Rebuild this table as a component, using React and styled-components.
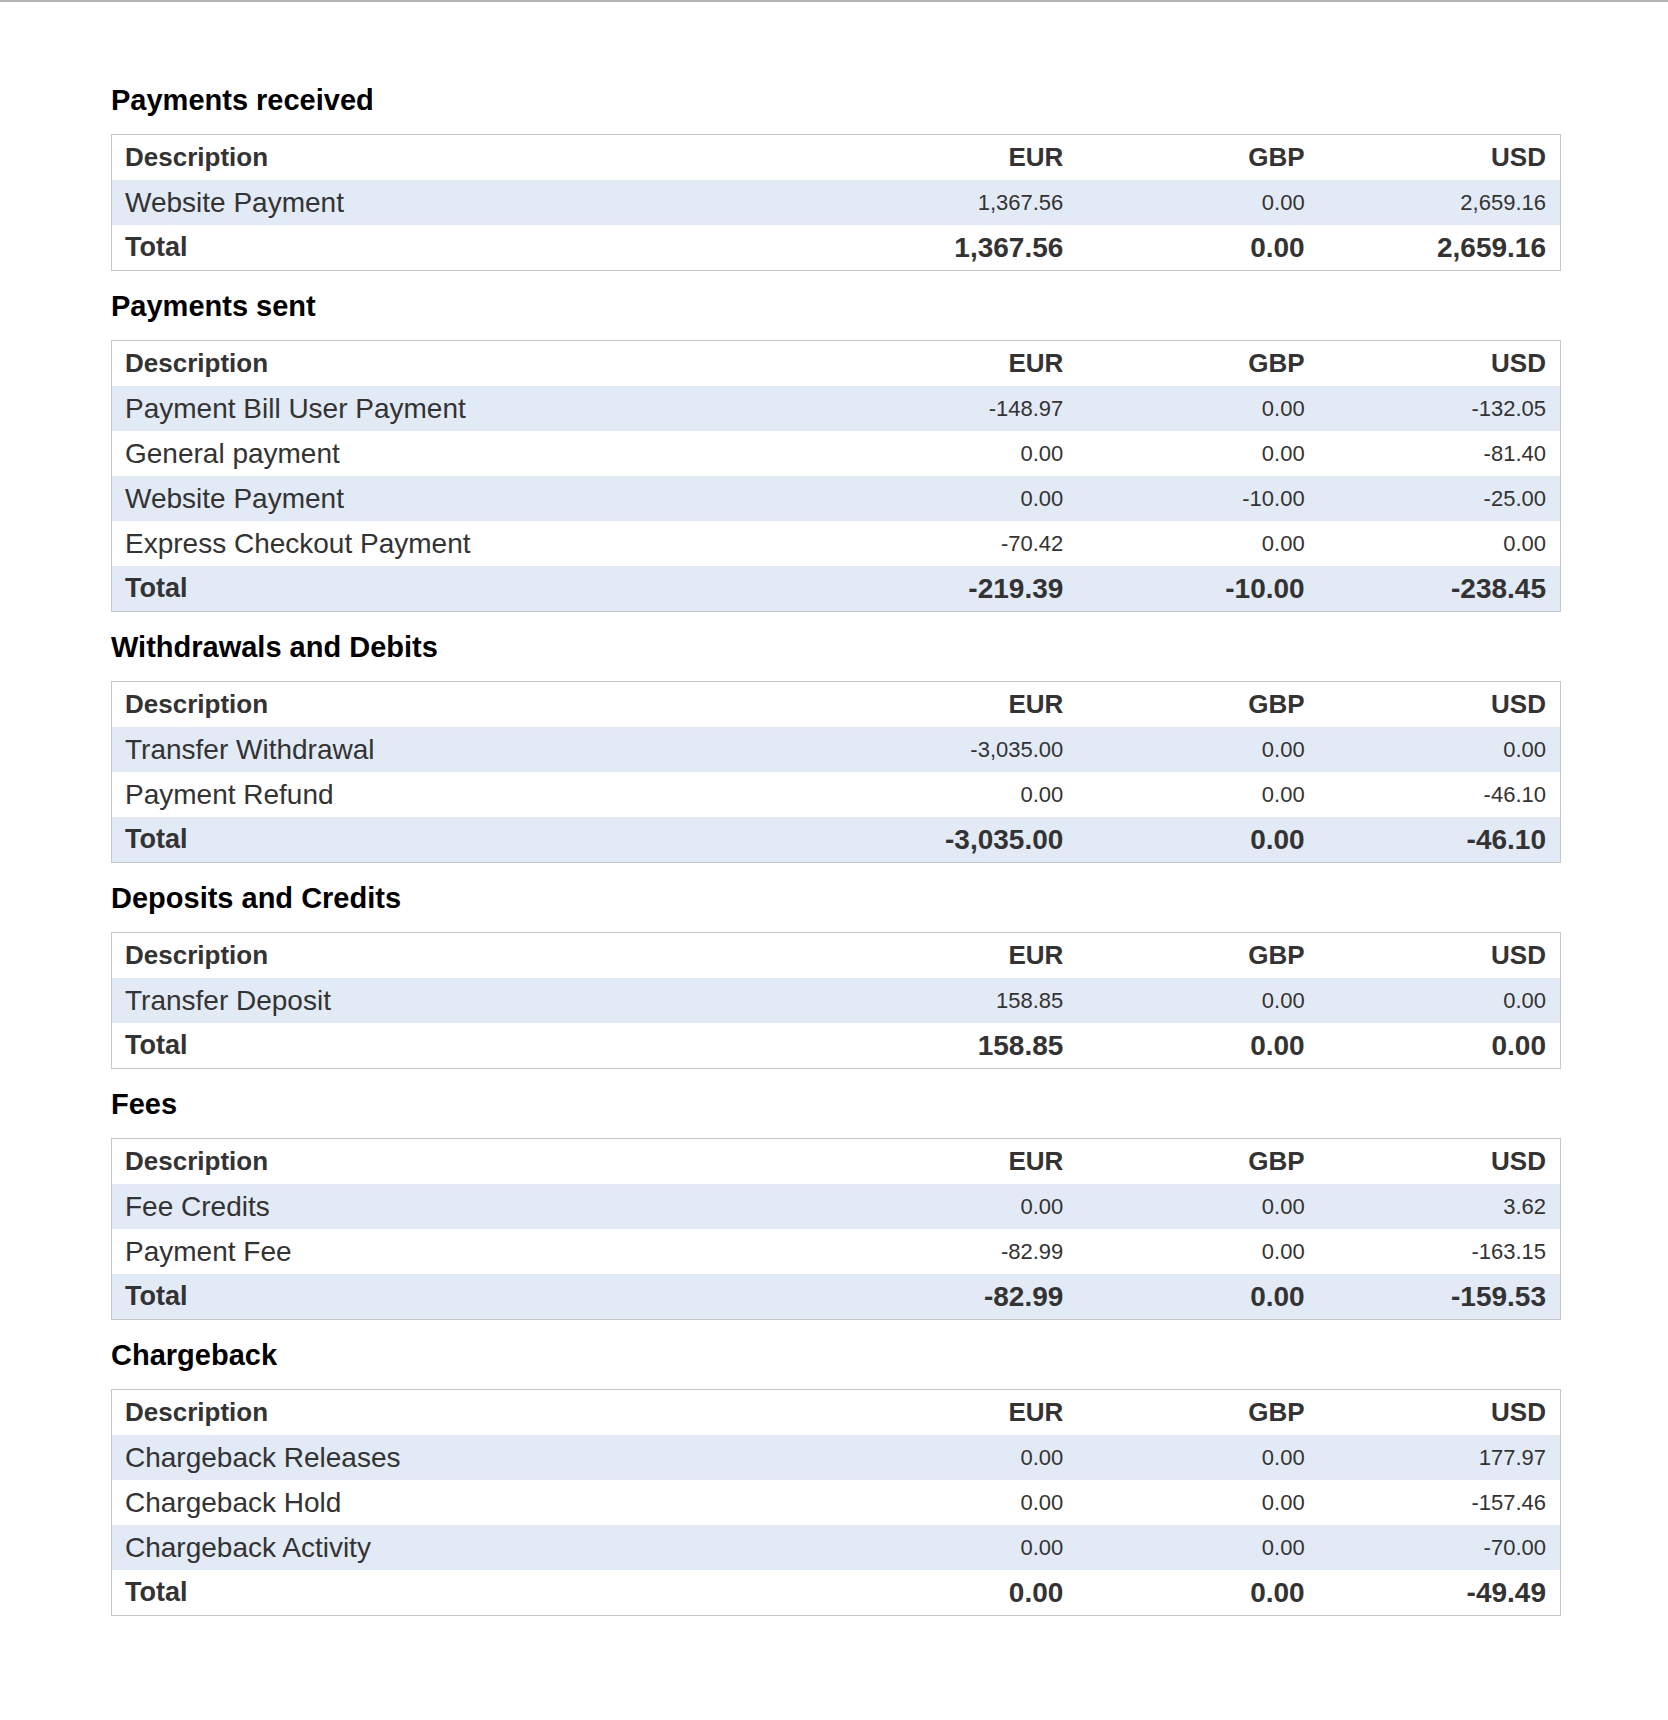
import React from 'react';
import styled, { createGlobalStyle } from 'styled-components';

// summary tables, one per kind of activity
const sections = [
    {
        title: 'Payments received',
        rows: [['Website Payment', '1,367.56', '0.00', '2,659.16']],
        total: ['1,367.56', '0.00', '2,659.16'],
    },
    {
        title: 'Payments sent',
        rows: [
            ['Payment Bill User Payment', '-148.97', '0.00', '-132.05'],
            ['General payment', '0.00', '0.00', '-81.40'],
            ['Website Payment', '0.00', '-10.00', '-25.00'],
            ['Express Checkout Payment', '-70.42', '0.00', '0.00'],
        ],
        total: ['-219.39', '-10.00', '-238.45'],
    },
    {
        title: 'Withdrawals and Debits',
        rows: [
            ['Transfer Withdrawal', '-3,035.00', '0.00', '0.00'],
            ['Payment Refund', '0.00', '0.00', '-46.10'],
        ],
        total: ['-3,035.00', '0.00', '-46.10'],
    },
    {
        title: 'Deposits and Credits',
        rows: [['Transfer Deposit', '158.85', '0.00', '0.00']],
        total: ['158.85', '0.00', '0.00'],
    },
    {
        title: 'Fees',
        rows: [
            ['Fee Credits', '0.00', '0.00', '3.62'],
            ['Payment Fee', '-82.99', '0.00', '-163.15'],
        ],
        total: ['-82.99', '0.00', '-159.53'],
    },
    {
        title: 'Chargeback',
        rows: [
            ['Chargeback Releases', '0.00', '0.00', '177.97'],
            ['Chargeback Hold', '0.00', '0.00', '-157.46'],
            ['Chargeback Activity', '0.00', '0.00', '-70.00'],
        ],
        total: ['0.00', '0.00', '-49.49'],
    },
];

const currencies = ['EUR', 'GBP', 'USD'];

const SummaryTable = ({ title, rows, total }) => {
    return (
        <Section>
            <Heading>{title}</Heading>
            <Table>
                <thead>
                    <tr>
                        <HeadCell>Description</HeadCell>
                        {currencies.map((c) => (
                            <HeadCell key={c} $num>{c}</HeadCell>
                        ))}
                    </tr>
                </thead>
                <tbody>
                    {rows.map(([label, ...values], i) => (
                        <Row key={i}>
                            <Label>{label}</Label>
                            {values.map((v, j) => (
                                <Amount key={j}>{v}</Amount>
                            ))}
                        </Row>
                    ))}
                    <Row>
                        <Label $total>Total</Label>
                        {total.map((v, j) => (
                            <Amount key={j} $total>{v}</Amount>
                        ))}
                    </Row>
                </tbody>
            </Table>
        </Section>
    );
};

const App = () => {
    return (
        <>
            <GlobalStyle />
            <Page>
                {sections.map((s) => (
                    <SummaryTable key={s.title} {...s} />
                ))}
            </Page>
        </>
    );
};

export default App;

const GlobalStyle = createGlobalStyle`
    * {
        box-sizing: border-box;
    }

    body {
        margin: 0;
        background: #fff;
        border-top: 2px solid #b4b4b4;
        font-family: "Liberation Sans", Arial, Helvetica, sans-serif;
        color: #333;
    }
`

const Page = styled.div`
    width: 1561px;
    padding: 63px 0 104px 111px;
`

const Section = styled.section`
    display: flex;
    flex-direction: column;
`

const Heading = styled.h2`
    margin: 18px 0 17px;
    font-size: 29px;
    line-height: 34px;
    font-weight: 700;
    color: #000;
`

const Table = styled.table`
    width: 1450px;
    border: 1px solid #c6c6c6;
    border-spacing: 0;
    table-layout: fixed;

    th:first-child,
    td:first-child {
        width: 50%;
    }
`

const Row = styled.tr`
    &:nth-child(odd) {
        background: #e2eaf6;
    }
`

const HeadCell = styled.th`
    height: 45px;
    padding: 0 14px 0 13px;
    font-size: 26px;
    font-weight: 700;
    text-align: ${(p) => (p.$num ? 'right' : 'left')};
    vertical-align: middle;
    color: #333;
`

const Label = styled.td`
    height: 45px;
    padding: 0 14px 0 13px;
    font-size: ${(p) => (p.$total ? '27px' : '28px')};
    font-weight: ${(p) => (p.$total ? 700 : 400)};
    vertical-align: middle;
    white-space: nowrap;
`

const Amount = styled.td`
    height: 45px;
    padding: 0 14px 0 13px;
    font-size: ${(p) => (p.$total ? '28px' : '22px')};
    font-weight: ${(p) => (p.$total ? 700 : 400)};
    text-align: right;
    vertical-align: middle;
    white-space: nowrap;
`
